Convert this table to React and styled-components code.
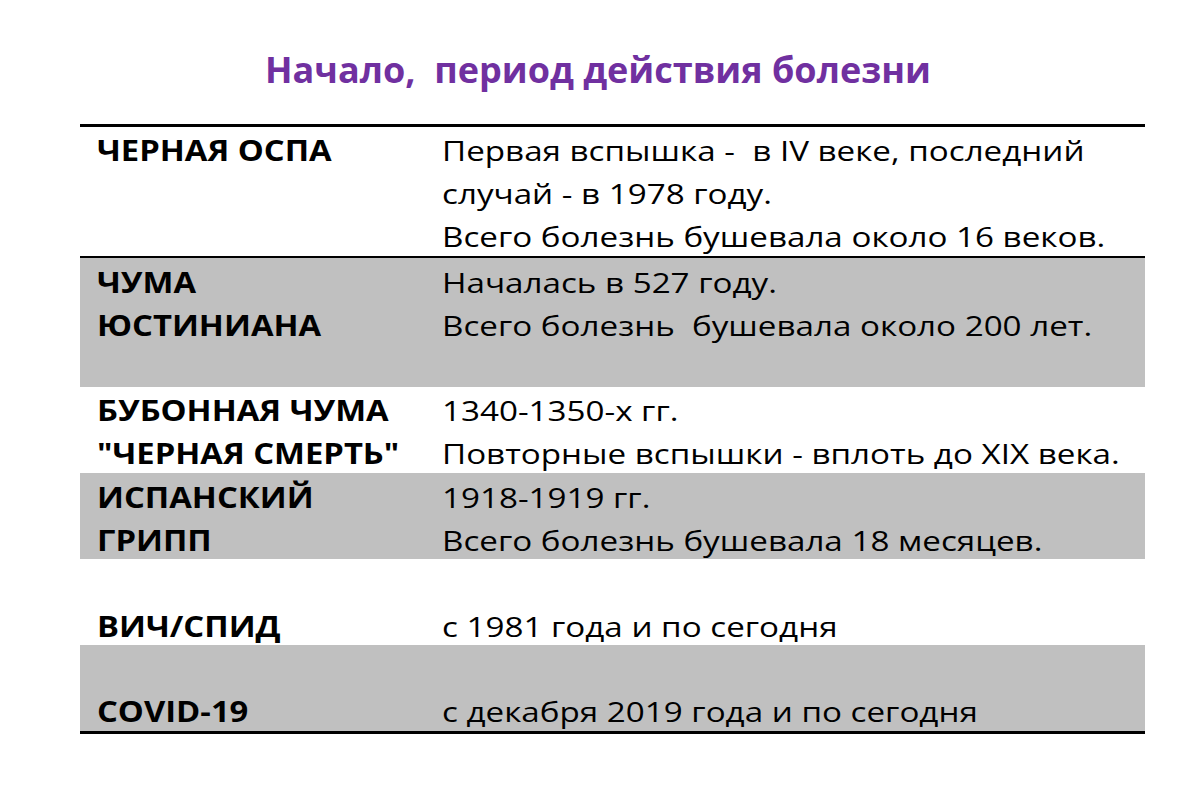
import React from "react";
import styled, { createGlobalStyle } from "styled-components";

const Global = createGlobalStyle`
  html, body { margin: 0; padding: 0; background: #ffffff; overflow: hidden; }
  body { font-family: "Open Sans", "Liberation Sans", sans-serif; color: #000; }
`;

const Page = styled.div`
  width: 1200px;
  height: 790px;
  display: flex;
  flex-direction: column;
  box-sizing: border-box;
  padding-top: 44px;
  overflow: hidden;
`;

const Title = styled.h1`
  margin: 0;
  align-self: center;
  transform: translateX(-2px);
  font-size: 36px;
  font-weight: 700;
  color: #7030a0;
  line-height: 52px;
  white-space: pre;
`;

const Table = styled.div`
  margin-top: 28px;
  margin-left: 80px;
  width: 1065px;
  border-top: 3px solid #000;
  border-bottom: 3px solid #000;
  display: flex;
  flex-direction: column;
`;

const Row = styled.div`
  display: grid;
  grid-template-columns: 362px 1fr;
  align-items: start;
  justify-items: start;
  height: ${(p) => p.$h}px;
  box-sizing: border-box;
  background: ${(p) => (p.$shaded ? "#c0c0c0" : "#ffffff")};
  border-bottom: ${(p) => (p.$rule ? "2px solid #000" : "none")};
  padding-top: ${(p) => p.$pt || 0}px;
`;

const Name = styled.div`
  margin-left: 17px;
  width: max-content;
  font-weight: 700;
  font-size: 28px;
  line-height: 43px;
  white-space: pre;
  transform: scaleX(1.17);
  transform-origin: left center;
`;

const Info = styled.div`
  width: max-content;
  font-size: 28px;
  line-height: 43px;
  white-space: pre;
  transform: scaleX(1.185);
  transform-origin: left center;
`;

const rows = [
  {
    name: "ЧЕРНАЯ ОСПА",
    info: "Первая вспышка -  в IV веке, последний\nслучай - в 1978 году.\nВсего болезнь бушевала около 16 веков.",
    h: 131,
    rule: true,
    pt: 2,
  },
  {
    name: "ЧУМА\nЮСТИНИАНА",
    info: "Началась в 527 году.\nВсего болезнь  бушевала около 200 лет.",
    h: 129,
    shaded: true,
    pt: 3,
  },
  {
    name: "БУБОННАЯ ЧУМА\n\"ЧЕРНАЯ СМЕРТЬ\"",
    info: "1340-1350-х гг.\nПовторные вспышки - вплоть до XIX века.",
    h: 86,
    pt: 2,
  },
  {
    name: "ИСПАНСКИЙ\nГРИПП",
    info: "1918-1919 гг.\nВсего болезнь бушевала 18 месяцев.",
    h: 86,
    shaded: true,
    pt: 3,
  },
  {
    name: "ВИЧ/СПИД",
    info: "с 1981 года и по сегодня",
    h: 86,
    pt: 46,
  },
  {
    name: "COVID-19",
    info: "с декабря 2019 года и по сегодня",
    h: 86,
    shaded: true,
    pt: 45,
  },
];

export default function App() {
  return (
    <Page>
      <Global />
      <Title>{"Начало,  период действия болезни"}</Title>
      <Table>
        {rows.map((r, i) => (
          <Row key={i} $h={r.h} $shaded={r.shaded} $rule={r.rule} $pt={r.pt}>
            <Name>{r.name}</Name>
            <Info>{r.info}</Info>
          </Row>
        ))}
      </Table>
    </Page>
  );
}
